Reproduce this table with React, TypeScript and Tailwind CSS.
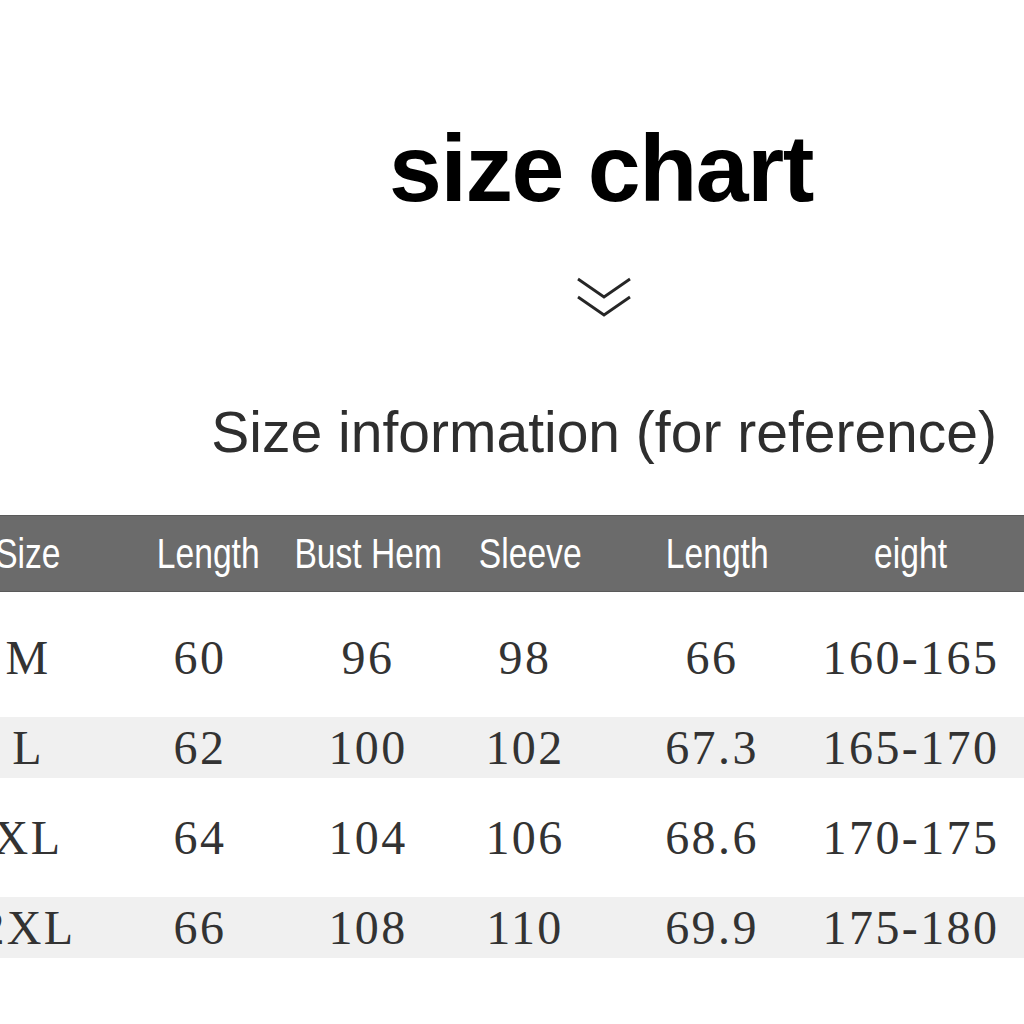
const headers = ["Size", "Length", "Bust Hem", "Sleeve", "Length", "eight"];

const rows = [
  ["M", "60", "96", "98", "66", "160-165"],
  ["L", "62", "100", "102", "67.3", "165-170"],
  ["XL", "64", "104", "106", "68.6", "170-175"],
  ["2XL", "66", "108", "110", "69.9", "175-180"],
];

const cols = "grid grid-cols-[116px_228px_108px_206px_168px_230px] -ml-[30px] w-[1056px]";

function Chevrons() {
  return (
    <svg width="60" height="50" viewBox="0 0 60 50" fill="none">
      <path d="M4 3 L30 21 L56 3" stroke="#262626" strokeWidth="2.8" />
      <path d="M4 21 L30 39 L56 21" stroke="#262626" strokeWidth="2.8" />
    </svg>
  );
}

export default function App() {
  return (
    <div className="w-[1024px] h-[1024px] overflow-hidden bg-white">
      <div className="flex flex-col">
        <div className="pt-[121px] pl-[389px]">
          <h1 className="font-['Liberation_Sans',Arial,sans-serif] font-bold text-[95px] leading-none tracking-[-0.015em] text-black whitespace-nowrap">
            size chart
          </h1>
        </div>
        <div className="mt-[60px] pl-[574px]">
          <Chevrons />
        </div>
        <div className="mt-[78px] flex justify-end pr-[27px]">
          <p className="font-['Liberation_Sans',Arial,sans-serif] text-[57px] leading-none text-[#2e2e2e] whitespace-nowrap">
            Size information (for reference)
          </p>
        </div>

        <div className="mt-[54px] h-[77px] bg-[#6b6b6b] border-y border-[#5a5a5a] flex items-center">
          <div className={cols}>
            {headers.map((h, i) => (
              <div
                key={i}
                className={
                  "flex justify-center " +
                  (i === 1 ? "pl-[16px]" : i === 3 ? "pl-[10px]" : i === 4 ? "pl-[10px]" : "")
                }
              >
                <span className="inline-block scale-x-[0.8] whitespace-nowrap font-['Liberation_Sans',Arial,sans-serif] text-[42px] leading-none text-white">
                  {h}
                </span>
              </div>
            ))}
          </div>
        </div>

        <div className="mt-[35px] flex flex-col gap-[29px]">
          {rows.map((r, ri) => (
            <div
              key={ri}
              className={"h-[61px] flex items-center " + (ri % 2 === 1 ? "bg-[#f0f0f0]" : "bg-white")}
            >
              <div className={cols}>
                {r.map((c, ci) => (
                  <div
                    key={ci}
                    className="text-center font-['Liberation_Serif','Times_New_Roman',serif] text-[48px] leading-none tracking-[0.05em] text-[#333333] whitespace-nowrap"
                  >
                    {c}
                  </div>
                ))}
              </div>
            </div>
          ))}
        </div>
      </div>
    </div>
  );
}
